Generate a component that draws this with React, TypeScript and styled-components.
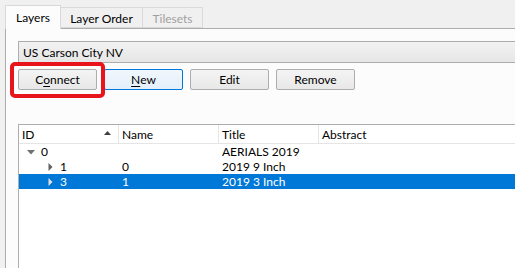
import styled, { createGlobalStyle } from 'styled-components';

const GlobalStyle = createGlobalStyle`
  html, body {
    margin: 0;
    padding: 0;
    background: #f0f0f0;
    overflow: hidden;
  }
  body {
    font-family: Lato, 'Noto Sans', 'Liberation Sans', sans-serif;
    font-size: 12px;
    color: #000;
  }
`;

interface TreeRow {
  id: string;
  name: string;
  title: string;
  depth: number;
  expanded?: boolean;
  selected?: boolean;
}

const rows: TreeRow[] = [
  { id: '0', name: '', title: 'AERIALS 2019', depth: 0, expanded: true },
  { id: '1', name: '0', title: '2019 9 Inch', depth: 1 },
  { id: '3', name: '1', title: '2019 3 Inch', depth: 1, selected: true },
];

const App = () => {
  return (
    <Window>
      <GlobalStyle />
      <TabBar>
        <Tab $active $width={56}>Layers</Tab>
        <Tab $width={82}>Layer Order</Tab>
        <Tab $disabled $width={60}>Tilesets</Tab>
      </TabBar>
      <Pane>
        <Combo>US Carson City NV</Combo>
        <ButtonRow>
          <ButtonSlot>
            <Button>
              C<u>o</u>nnect
            </Button>
            <Highlight />
          </ButtonSlot>
          <Button $focused>
            <u>N</u>ew
          </Button>
          <Button>Edit</Button>
          <Button>Remove</Button>
        </ButtonRow>
        <Tree>
          <Header>
            <HeaderCell $width={100}>
              ID
              <SortArrow viewBox="0 0 7 4">
                <path d="M0 4 L3.5 0 L7 4 Z" fill="#404040" />
              </SortArrow>
            </HeaderCell>
            <HeaderCell $width={100}>Name</HeaderCell>
            <HeaderCell $width={100}>Title</HeaderCell>
            <HeaderCell $width={200}>Abstract</HeaderCell>
          </Header>
          {rows.map((row) => (
            <Row key={row.id} $selected={row.selected}>
              <Cell $width={100} style={{ paddingLeft: 8 + row.depth * 19 }}>
                <Expander viewBox="0 0 8 8">
                  {row.expanded ? (
                    <path d="M0 2 L8 2 L4 6.5 Z" fill={row.selected ? '#fff' : '#707070'} />
                  ) : (
                    <path d="M2.5 0 L6.5 4 L2.5 8 Z" fill={row.selected ? '#e0e0e0' : '#606060'} />
                  )}
                </Expander>
                {row.id}
              </Cell>
              <Cell $width={100}>{row.name}</Cell>
              <Cell $width={100}>{row.title}</Cell>
              <Cell $width={200} />
            </Row>
          ))}
        </Tree>
      </Pane>
    </Window>
  );
};

const Window = styled.div`
  width: 515px;
  height: 268px;
  padding: 5px 0 0 5px;
  box-sizing: border-box;
  display: flex;
  flex-direction: column;
`;

const TabBar = styled.div`
  display: flex;
  align-items: flex-end;
  height: 24px;
  position: relative;
  z-index: 1;
  margin-bottom: -1px;
`;

const Tab = styled.div<{ $active?: boolean; $disabled?: boolean; $width: number }>`
  box-sizing: border-box;
  width: ${(p) => p.$width}px;
  height: ${(p) => (p.$active ? 24 : 21)}px;
  margin-bottom: ${(p) => (p.$active ? 0 : 1)}px;
  display: flex;
  align-items: center;
  justify-content: center;
  padding-top: ${(p) => (p.$active ? 0 : 1)}px;
  border: 1px solid #d9d9d9;
  border-bottom: ${(p) => (p.$active ? 'none' : '1px solid #d9d9d9')};
  border-left: ${(p) => (p.$active ? '1px solid #d9d9d9' : 'none')};
  background: ${(p) => (p.$active ? '#fcfcfc' : '#f0f0f0')};
  color: ${(p) => (p.$disabled ? '#a0a0a0' : '#000')};
`;

const Pane = styled.div`
  flex: 1;
  background: #fcfcfc;
  border-top: 1px solid #adadad;
  border-left: 1px solid #adadad;
  padding: 12px 0 0 12px;
  display: flex;
  flex-direction: column;
`;

const Combo = styled.div`
  height: 22px;
  box-sizing: border-box;
  border: 1px solid #adadad;
  border-right: none;
  background: linear-gradient(#f2f2f2, #e6e6e6);
  padding: 0 4px;
  display: flex;
  align-items: center;
`;

const ButtonRow = styled.div`
  display: flex;
  gap: 7px;
  margin-top: 6px;
`;

const ButtonSlot = styled.div`
  position: relative;
  display: flex;
`;

const Button = styled.div<{ $focused?: boolean }>`
  width: 79px;
  height: 21px;
  box-sizing: border-box;
  border: 1px solid ${(p) => (p.$focused ? '#0078d7' : '#adadad')};
  border-radius: 2px;
  background: ${(p) => (p.$focused ? 'linear-gradient(#f1f7fd, #e3effa)' : 'linear-gradient(#f4f4f4, #e8e8e8)')};
  display: flex;
  align-items: center;
  justify-content: center;

  u {
    text-decoration-thickness: 1px;
    text-underline-offset: 2px;
  }
`;

const Highlight = styled.div`
  position: absolute;
  left: -8px;
  top: -7px;
  width: 95px;
  height: 36px;
  box-sizing: border-box;
  border: 4px solid #e8131b;
  border-radius: 5px;
  pointer-events: none;
`;

const Tree = styled.div`
  margin-top: 34px;
  flex: 1;
  background: #fff;
  border-top: 1px solid #adadad;
  border-left: 1px solid #adadad;
`;

const Header = styled.div`
  display: flex;
  height: 18px;
  border-bottom: 1px solid #e5e5e5;
`;

const HeaderCell = styled.div<{ $width: number }>`
  position: relative;
  width: ${(p) => p.$width}px;
  flex-shrink: 0;
  box-sizing: border-box;
  padding-left: 3px;
  border-right: 1px solid #e5e5e5;
  display: flex;
  align-items: center;
`;

const SortArrow = styled.svg`
  position: absolute;
  right: 7px;
  top: 6px;
  width: 7px;
  height: 4px;
`;

const Row = styled.div<{ $selected?: boolean }>`
  display: flex;
  height: 15px;
  background: ${(p) => (p.$selected ? '#0078d7' : 'transparent')};
  color: ${(p) => (p.$selected ? '#fff' : '#000')};
`;

const Cell = styled.div<{ $width: number }>`
  width: ${(p) => p.$width}px;
  flex-shrink: 0;
  box-sizing: border-box;
  padding-left: 3px;
  display: flex;
  align-items: center;
  white-space: nowrap;
`;

const Expander = styled.svg`
  width: 8px;
  height: 8px;
  margin-right: 6px;
`;

export default App;
